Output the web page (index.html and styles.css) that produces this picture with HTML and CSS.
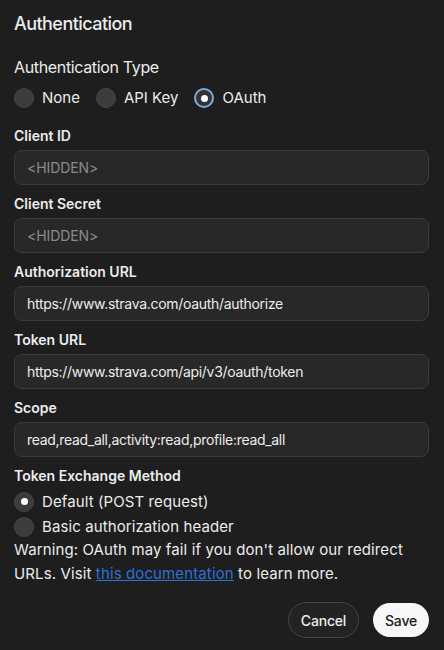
FILE: index.html
```html
<!DOCTYPE html>
<html>
<head>
<meta charset="utf-8">
<link rel="stylesheet" href="styles.css">
</head>
<body>
<div class="dialog">
  <h1 class="title">Authentication</h1>
  <div class="section-title">Authentication Type</div>
  <div class="radio-row">
    <label class="radio"><span class="dot"></span><span>None</span></label>
    <label class="radio"><span class="dot"></span><span>API Key</span></label>
    <label class="radio"><span class="dot checked focused"></span><span>OAuth</span></label>
  </div>

  <div class="fields">
    <div class="field">
      <div class="label">Client ID</div>
      <div class="input placeholder">&lt;HIDDEN&gt;</div>
    </div>
    <div class="field">
      <div class="label">Client Secret</div>
      <div class="input placeholder">&lt;HIDDEN&gt;</div>
    </div>
    <div class="field">
      <div class="label">Authorization URL</div>
      <div class="input">https://www.strava.com/oauth/authorize</div>
    </div>
    <div class="field">
      <div class="label">Token URL</div>
      <div class="input">https://www.strava.com/api/v3/oauth/token</div>
    </div>
    <div class="field">
      <div class="label">Scope</div>
      <div class="input">read,read_all,activity:read,profile:read_all</div>
    </div>
  </div>

  <div class="label method-label">Token Exchange Method</div>
  <div class="radio-col">
    <label class="radio"><span class="dot checked"></span><span>Default (POST request)</span></label>
    <label class="radio"><span class="dot"></span><span>Basic authorization header</span></label>
  </div>
  <p class="warning">Warning: OAuth may fail if you don't allow our redirect URLs. Visit <a href="#">this documentation</a> to learn more.</p>

  <div class="actions">
    <button class="btn btn-cancel">Cancel</button>
    <button class="btn btn-save">Save</button>
  </div>
</div>
</body>
</html>
```

FILE: styles.css
```css
* { box-sizing: border-box; }
html, body {
  margin: 0;
  padding: 0;
  background: #1e1e1e;
  width: 444px;
  height: 650px;
  overflow: hidden;
}
body {
  font-family: Inter, "Noto Sans", sans-serif;
  color: #ececec;
}
.dialog {
  padding: 12px 15px 0 14px;
  display: flex;
  flex-direction: column;
}
.title {
  margin: 0;
  font-size: 18px;
  font-weight: 500;
  line-height: 24px;
  letter-spacing: -0.55px;
}
.section-title {
  margin-top: 20px;
  font-size: 16px;
  line-height: 22px;
  font-weight: 400;
  letter-spacing: -0.35px;
}
.radio-row {
  margin-top: 9px;
  display: flex;
  gap: 16px;
  height: 22px;
  align-items: center;
}
.radio {
  display: flex;
  align-items: center;
  gap: 8px;
  font-size: 15px;
  line-height: 22px;
}
.dot {
  width: 20px;
  height: 20px;
  border-radius: 50%;
  background: #3c3c3c;
  border: 1px solid #444;
  flex: none;
  position: relative;
}
.dot.checked::after {
  content: "";
  position: absolute;
  left: 50%;
  top: 50%;
  width: 7px;
  height: 7px;
  margin: -3.5px 0 0 -3.5px;
  border-radius: 50%;
  background: #fff;
}
.dot.focused {
  border: 2px solid #7fa7e6;
  background: #333;
}
.fields {
  margin-top: 18px;
  display: flex;
  flex-direction: column;
  gap: 10px;
}
.field {
  display: flex;
  flex-direction: column;
  gap: 6px;
}
.label {
  font-size: 14px;
  font-weight: 600;
  line-height: 17px;
}
.input {
  height: 35px;
  border: 1px solid #3b3b3b;
  border-radius: 8px;
  background: #282828;
  padding: 0 12px;
  display: flex;
  align-items: center;
  font-size: 14px;
  letter-spacing: -0.3px;
  color: #ececec;
}
.input.placeholder {
  color: #8a8a8a;
  letter-spacing: -0.1px;
}
.method-label {
  margin-top: 10px;
}
.radio-col {
  margin-top: 5px;
  display: flex;
  flex-direction: column;
}
.radio-col .radio {
  height: 25px;
  letter-spacing: 0.1px;
}
.warning {
  margin: -1px 0 0;
  font-size: 15px;
  line-height: 24px;
  letter-spacing: 0.12px;
}
.warning a {
  color: #2f6fd8;
  text-decoration: underline;
}
.actions {
  margin-top: 16px;
  display: flex;
  justify-content: flex-end;
  align-items: center;
  gap: 14px;
}
.btn {
  font-family: inherit;
  font-size: 14px;
  font-weight: 500;
  border-radius: 18px;
  cursor: pointer;
  letter-spacing: -0.2px;
}
.btn-cancel {
  height: 36px;
  width: 71px;
  padding: 0;
  background: #232323;
  border: 1px solid #444;
  color: #ececec;
}
.btn-save {
  height: 34px;
  width: 56px;
  padding: 0;
  background: #f7f7f7;
  border: none;
  color: #1a1a1a;
}
```
